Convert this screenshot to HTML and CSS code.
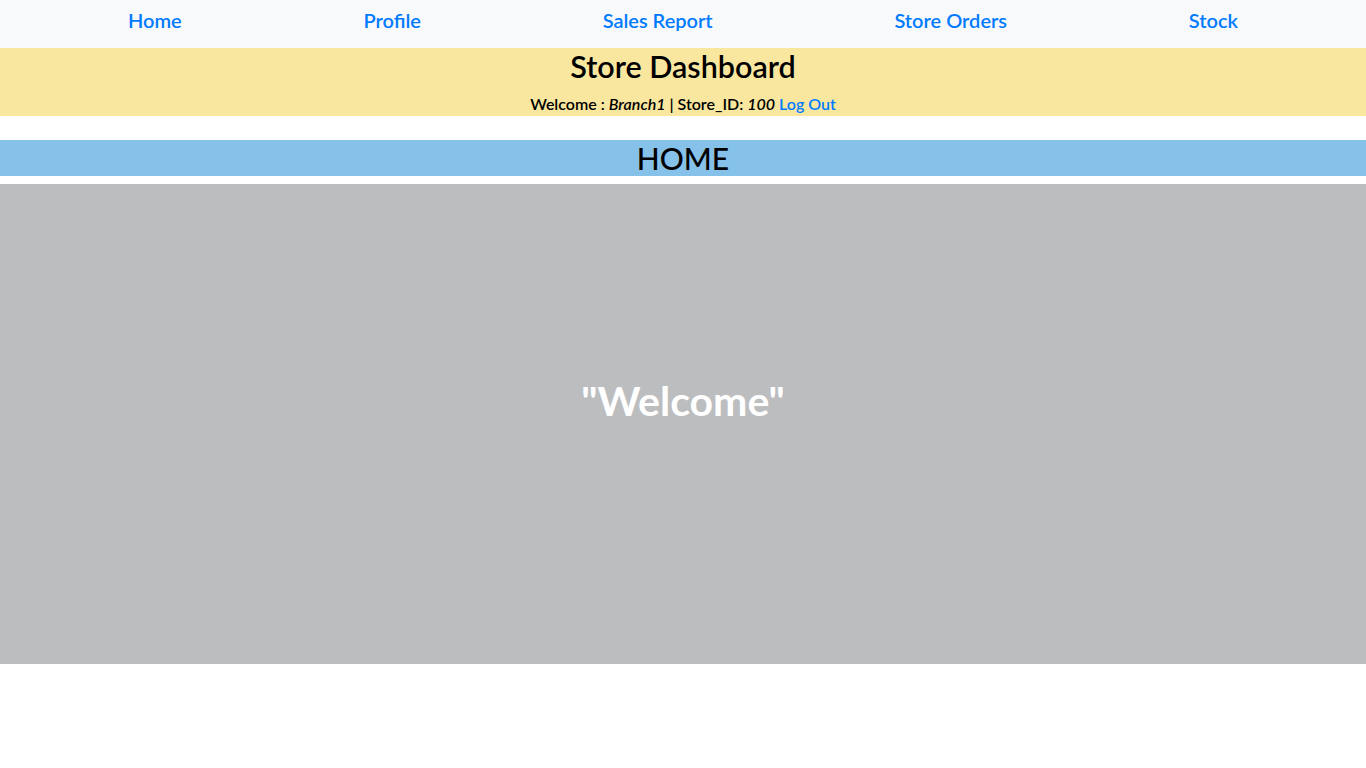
FILE: index.html
```html
<!DOCTYPE html>
<html>
<head>
<meta charset="utf-8">
<link rel="stylesheet" href="styles.css">
</head>
<body>
<nav class="topnav">
  <a href="#">Home</a>
  <a href="#">Profile</a>
  <a href="#">Sales Report</a>
  <a href="#">Store Orders</a>
  <a href="#">Stock</a>
</nav>
<header class="banner">
  <h2 class="title">Store Dashboard</h2>
  <p class="welcome">Welcome : <i>Branch1</i> | Store_ID: <i>100</i> <a href="#">Log Out</a></p>
</header>
<h3 class="section">HOME</h3>
<main class="hero">
  <h1 class="hero-text">"Welcome"</h1>
</main>
</body>
</html>
```
FILE: styles.css
```css
html, body {
  margin: 0;
  padding: 0;
  background: #ffffff;
  font-family: Lato, "Open Sans", "Liberation Sans", sans-serif;
}
.topnav {
  height: 48px;
  background: #f8f9fa;
  display: flex;
  align-items: center;
  justify-content: space-between;
  padding: 0 128px;
  box-sizing: border-box;
}
.topnav a {
  color: #007bff;
  text-decoration: none;
  font-size: 20px;
  font-weight: 600;
  line-height: 24px;
  margin-top: -8px;
}
.banner {
  background: #f9e79f;
  height: 68px;
  text-align: center;
  display: flex;
  flex-direction: column;
  align-items: center;
  box-sizing: border-box;
  padding-top: 0;
}
.title {
  margin: 0;
  font-size: 30.5px;
  font-weight: 600;
  line-height: 36px;
  color: #000;
}
.welcome {
  margin: 0;
  margin-top: 9px;
  font-size: 16px;
  font-weight: 600;
  line-height: 22px;
  color: #000;
}
.welcome a {
  color: #007bff;
  text-decoration: none;
}
.section {
  margin: 24px 0 0 0;
  height: 36px;
  background: #85c1e9;
  text-align: center;
  font-size: 30px;
  font-weight: 500;
  line-height: 36px;
  color: #000;
}
.hero {
  margin-top: 8px;
  height: 480px;
  background: #bcbdbf;
  display: flex;
  align-items: center;
  justify-content: center;
}
.hero-text {
  margin: 0;
  margin-top: -48px;
  color: #ffffff;
  font-size: 41px;
  font-weight: 700;
}
```
